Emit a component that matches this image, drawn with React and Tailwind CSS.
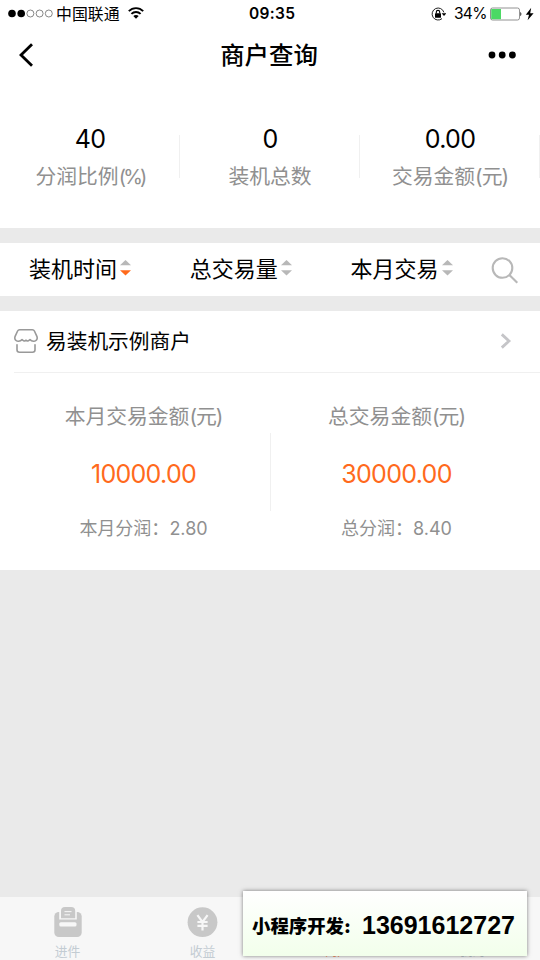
const stats = [
  { value: "40", label: "分润比例", unit: "(%)" },
  { value: "0", label: "装机总数", unit: "" },
  { value: "0.00", label: "交易金额", unit: "(元)" },
];

const filters = [
  { name: "装机时间", active: true },
  { name: "总交易量", active: false },
  { name: "本月交易", active: false },
];

const totals = [
  { label: "本月交易金额", value: "10000.00", share: "本月分润：", amount: "2.80" },
  { label: "总交易金额", value: "30000.00", share: "总分润：", amount: "8.40" },
];

function StatusBar() {
  return (
    <div className="flex h-7 items-center">
      <div className="flex w-[249px] items-center pl-2">
        <svg className="h-3 w-[46px]" viewBox="0 0 46 12">
          <circle cx="4" cy="5.5" r="3.8" />
          <circle cx="13.2" cy="5.5" r="3.8" />
          <g fill="none" stroke="#555" strokeWidth="0.7">
            <circle cx="22.4" cy="5.5" r="3.5" />
            <circle cx="31.6" cy="5.5" r="3.5" />
            <circle cx="40.8" cy="5.5" r="3.5" />
          </g>
        </svg>
        <span className="ml-[2px] pt-px text-[15.9px] leading-7">中国联通</span>
        <svg className="ml-[8px] mt-[-2px] h-3 w-4" viewBox="0 0 16 12">
          <g fill="none" stroke="#000" strokeWidth="1.9">
            <path d="M0.8 4.2C4.8 .1 11.2 .1 15.2 4.2" />
            <path d="M3.4 6.9C6 4.3 10 4.3 12.6 6.9" />
          </g>
          <path d="M8 11.8L5.3 9.1C6.8 7.7 9.2 7.7 10.7 9.1Z" />
        </svg>
      </div>
      <span className="w-[182px] text-[15.5px] font-semibold leading-7 tracking-[0.3px]">09:35</span>
      <svg className="mt-[-1px] h-4 w-[15px]" viewBox="0 0 15 16">
        <path d="M12.9 6.4A6 6 0 1 0 11 12.6" fill="none" stroke="#222" strokeWidth="1" />
        <path d="M10.6 7.2H15.4L13 10Z" />
        <rect x="4" y="7.2" width="6" height="4.6" rx="0.5" />
        <path d="M5.3 7.4V6.1a1.7 1.7 0 0 1 3.4 0V7.4" fill="none" stroke="#000" strokeWidth="1.1" />
      </svg>
      <span className="ml-2 w-[36px] text-[15.5px] leading-7 tracking-[-0.7px]">34%</span>
      <svg className="mt-[-1px] h-4 w-[46px]" viewBox="0 0 46 16">
        <rect x="0.5" y="2" width="29" height="12" rx="2" fill="#fff" stroke="#777" strokeWidth="0.8" />
        <path d="M1.2 3H11V13.2H1.2Z" fill="#4cd964" />
        <path d="M30.4 5.7Q32.3 8 30.4 10.3Z" />
        <path d="M41.2 1.8L35.8 8.8H39L37.6 14.2L43.6 7.2H40.2Z" />
      </svg>
    </div>
  );
}

function NavBar() {
  return (
    <header className="flex h-[54px] items-center">
      <svg className="ml-[18px] h-6 w-4" viewBox="0 0 16 24" fill="none" stroke="#000" strokeWidth="2.8">
        <path d="M14 1.2L3 12L14 22.8" />
      </svg>
      <h1 className="flex-1 pl-[16px] text-center text-[24.4px] font-medium leading-[54px]">商户查询</h1>
      <svg className="mr-[22px] h-2 w-[30px]" viewBox="0 0 30 8">
        <circle cx="4" cy="4" r="3.4" />
        <circle cx="14.2" cy="4" r="3.4" />
        <circle cx="24.4" cy="4" r="3.4" />
      </svg>
    </header>
  );
}

function SortArrows({ active }) {
  return (
    <svg className="ml-[3px] mt-[-3px] h-4 w-[11px]" viewBox="0 0 11 16">
      <path d="M0 5.2L5.5 0L11 5.2Z" fill="#b8b8b8" />
      <path d="M0 10.2L5.5 15.6L11 10.2Z" fill={active ? "#ff6a1c" : "#b8b8b8"} />
    </svg>
  );
}

function Tab({ label, children, active }) {
  return (
    <div className="flex flex-1 flex-col items-center pt-[10px]">
      <div className="h-[31px]">{children}</div>
      <span className={`mt-[5px] text-[12.8px] leading-[18px] ${active ? "text-[#ff8a50]" : "text-[#c3ccd3]"}`}>
        {label}
      </span>
    </div>
  );
}

export default function App() {
  return (
    <div className="relative flex h-[960px] w-[540px] flex-col overflow-hidden bg-[#eaeaea] font-['Inter','Noto_Sans_CJK_SC',sans-serif] text-black">
      <div className="h-[228px] bg-white">
        <StatusBar />
        <NavBar />
        <section className="flex pt-[42px]">
          {stats.map((s) => (
            <div key={s.label} className="flex h-[70px] flex-1 items-center">
              <div className="flex-1 text-center">
                <div className="text-[25px] leading-[32px] tracking-[-0.7px]">{s.value}</div>
                <div className="mt-[3px] text-[20.8px] leading-[38px] text-[#909090]">
                  {s.label}
                  <span className={s.unit === "(%)" ? "text-[20px] tracking-[-2.8px]" : "tracking-[-1px]"}>{s.unit}</span>
                </div>
              </div>
              <div className="-ml-px mt-[-6px] h-[43px] w-px bg-[#f0f0f0]" />
            </div>
          ))}
        </section>
      </div>

      <section className="mt-[15px] flex h-[53px] items-center bg-white pl-[29px]">
        {filters.map((f) => (
          <div key={f.name} className="flex w-[160.8px] items-center">
            <span className="text-[22px] leading-[53px]">{f.name}</span>
            <SortArrows active={f.active} />
          </div>
        ))}
        <svg className="ml-[-20px] h-7 w-7" viewBox="0 0 28 28" fill="none" stroke="#b8b8b8" strokeWidth="2.1">
          <circle cx="11.5" cy="12" r="9.8" />
          <path d="M18.4 19L26.3 26.8" />
        </svg>
      </section>

      <section className="mt-[15px] h-[259px] bg-white">
        <div className="ml-[14px] flex h-[62px] items-center border-b border-[#f0f0f0]">
          <svg className="mt-[-2px] h-6 w-6" viewBox="0 0 24 24" fill="none" stroke="#999" strokeWidth="1.6" strokeLinejoin="round" strokeLinecap="round">
            <path d="M5.6 .8H18.4Q19.8 .8 20.4 2L23 7.7C23.8 10.4 22 12.6 19.4 12.2C18 12 16.9 11.5 16 10.6C15 11.8 13 12.6 12 11.2C11 12.6 9 11.8 8 10.6C7.1 11.5 6 12 4.6 12.2C2 12.6 .2 10.4 1 7.7L3.6 2Q4.2 .8 5.6 .8Z" />
            <path d="M3 15.7V20.7Q3 23.2 5.5 23.2H18.5Q21 23.2 21 20.7V15.7" />
          </svg>
          <span className="ml-2 flex-1 pt-px text-[20.7px] leading-[60px]">易装机示例商户</span>
          <svg className="mr-[28px] mt-[-2px] h-4 w-[12px]" viewBox="0 0 12 16" fill="none" stroke="#c5c5c8" strokeWidth="2.8">
            <path d="M1.8 1.4L9 8L1.8 14.6" />
          </svg>
        </div>
        <div className="flex pt-[24px]">
          {totals.map((t, i) => (
            <div key={t.label} className="flex flex-1">
              {i === 1 && <div className="mt-[36px] h-[78px] w-px bg-[#f0f0f0]" />}
              <div className={`flex-1 text-center ${i === 0 ? "pl-[17px]" : "pr-[18px]"}`}>
                <div className="text-[20.8px] leading-[40px] text-[#909090]">
                  {t.label}
                  <span className="tracking-[-1px]">(元)</span>
                </div>
                <div className="mt-[20px] text-[25px] leading-[34px] tracking-[-0.7px] text-[#ff6a1c]">{t.value}</div>
                <div className="mt-[20px] text-[18px] leading-[36px] text-[#909090]">
                  {t.share}
                  {t.amount}
                </div>
              </div>
            </div>
          ))}
        </div>
      </section>

      <nav className="mt-auto flex h-[63px] bg-[#f7f7f7]">
        <Tab label="进件">
          <svg className="h-[31px] w-7" viewBox="0 0 28 31">
            <rect x="0.3" y="5" width="27.4" height="25" rx="4.5" fill="#c8c8c8" />
            <path d="M5.2 12.4V3.5Q5.2 -1 9.5 -1H18.5Q22.8 -1 22.8 3.5V12.4Z" fill="#f7f7f7" />
            <path d="M7 11.2V4Q7 0 11 0H17.2Q21.2 0 21.2 4V11.2Z" fill="#c8c8c8" />
            <path d="M10.5 4.6H17.5M10.5 7.8H16" stroke="#f7f7f7" strokeWidth="1" />
            <rect x="5.3" y="15.2" width="17.2" height="4.4" rx="1.5" fill="#f7f7f7" />
          </svg>
        </Tab>
        <Tab label="收益">
          <svg className="h-[31px] w-[31px]" viewBox="0 0 31 31">
            <circle cx="15.5" cy="15.2" r="14.9" fill="#c8c8c8" />
            <path d="M10.4 8.2L15.5 15L20.6 8.2M15.5 15V23.4M10.4 15H20.6M10.4 18.8H20.6" fill="none" stroke="#f7f7f7" strokeWidth="2.2" />
          </svg>
        </Tab>
        <Tab label="商户" active />
        <Tab label="我的" />
      </nav>

      <div className="absolute left-[243px] top-[891px] flex h-[65px] w-[284px] items-center bg-gradient-to-b from-white to-[#f2ffeb] pl-[9px] font-bold shadow-[0_0_4px_rgba(0,0,0,0.5)]">
        <span className="w-[110px] whitespace-nowrap pt-[5px] text-[18.4px] font-black leading-[65px]">小程序开发:</span>
        <span className="pt-[4px] font-['Liberation_Sans','Noto_Sans_CJK_SC',sans-serif] text-[25px] leading-[65px]">13691612727</span>
      </div>
    </div>
  );
}
